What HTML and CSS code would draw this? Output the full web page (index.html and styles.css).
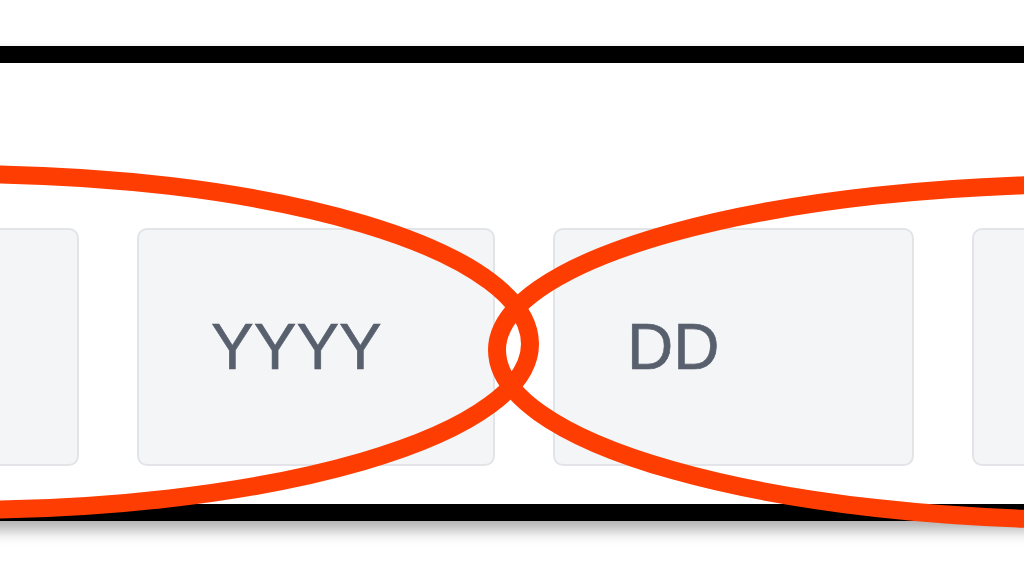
FILE: index.html
```html
<!DOCTYPE html>
<html lang="en">
<head>
<meta charset="utf-8">
<title>Date fields</title>
<link rel="stylesheet" href="styles.css">
</head>
<body>
<div class="page">
  <section class="panel">
    <div class="fields">
      <div class="field field-wide"></div>
      <div class="field"><span class="placeholder">YYYY</span></div>
      <div class="field field-wide"><span class="placeholder">DD</span></div>
      <div class="field"></div>
    </div>
  </section>
  <svg class="marks" width="1024" height="576" viewBox="0 0 1024 576" aria-hidden="true">
    <path d="M 530 344 A 570 170 0 0 0 -610 344 A 570 166 0 0 0 530 344" fill="none" stroke="#fe3d02" stroke-width="18"/>
    <path d="M 497 350 A 600 166 0 0 1 1697 350 A 600 170 0 0 1 497 350" fill="none" stroke="#fe3d02" stroke-width="18"/>
  </svg>
</div>
</body>
</html>
```
FILE: styles.css
```css
html, body {
  margin: 0;
  padding: 0;
  background: #ffffff;
  overflow: hidden;
}

.page {
  position: relative;
  width: 1024px;
  height: 576px;
  overflow: hidden;
  padding-top: 46px;
  box-sizing: border-box;
}

.panel {
  margin: 0 -30px;
  border-top: 17px solid #000;
  border-bottom: 17px solid #000;
  background: #fff;
  padding: 165px 0 38px;
  box-shadow: 0 9px 14px rgba(0, 0, 0, 0.32);
}

.fields {
  display: flex;
  gap: 58px;
  margin-left: -252px;
}

.field {
  flex: 0 0 358px;
  height: 238px;
  box-sizing: border-box;
  border: 2px solid #e2e4e8;
  border-radius: 10px;
  background: #f4f5f7;
  display: flex;
  align-items: center;
  padding-left: 72px;
}

.field-wide {
  flex-basis: 361px;
}

.placeholder {
  font-family: "Liberation Sans", Arial, sans-serif;
  font-size: 64px;
  color: #58606e;
  line-height: 1;
  -webkit-text-stroke: 0.6px #58606e;
}

.marks {
  position: absolute;
  left: 0;
  top: 0;
  pointer-events: none;
}
```
